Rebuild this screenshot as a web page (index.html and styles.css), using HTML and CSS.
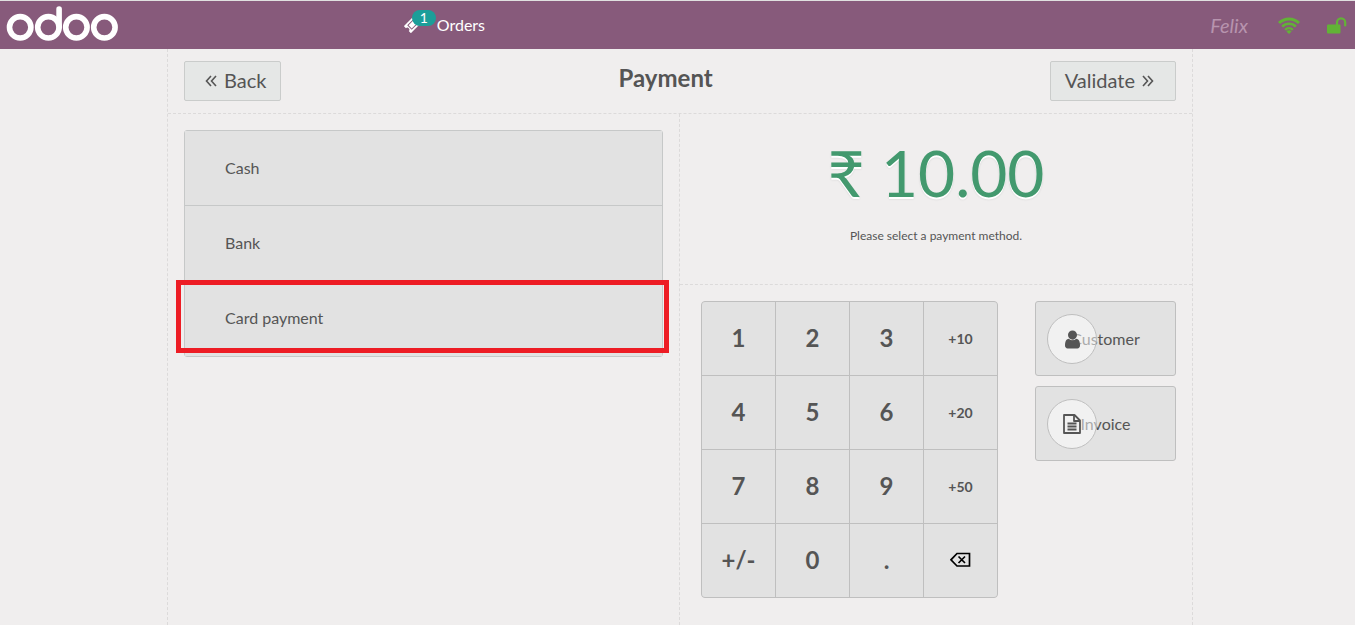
FILE: index.html
```html
<!DOCTYPE html>
<html lang="en">
<head>
    <meta charset="UTF-8">
    <meta name="viewport" content="width=device-width, initial-scale=1.0">
    <title>Payment</title>
    <link rel="stylesheet" href="styles.css">
</head>
<body>
    <header class="topbar">
        <a class="logo" href="#" aria-label="odoo">
            <svg width="112" height="36" viewBox="0 0 112 36" fill="none" stroke="#fff" stroke-width="5.6" stroke-linecap="round">
                <circle cx="14.2" cy="21.3" r="10.7"/>
                <circle cx="42.4" cy="21.3" r="10.7"/>
                <circle cx="70.4" cy="21.3" r="10.7"/>
                <circle cx="98.4" cy="21.3" r="10.7"/>
                <path d="M53.1 3v18"/>
            </svg>
        </a>
        <button class="orders">
            <span class="ticket">
                <svg width="18" height="18" viewBox="0 0 18 18">
                    <g transform="rotate(-45 9 9)">
                        <path fill="#fff" d="M1 4h16v3a2 2 0 0 0 0 4v3H1v-3a2 2 0 0 0 0-4z"/>
                        <path fill="none" stroke="#875a7b" stroke-width="1" d="M4.5 6.300h9v5.400h-9z"/>
                    </g>
                </svg>
                <span class="badge">1</span>
            </span>
            <span>Orders</span>
        </button>
        <div class="status">
            <span class="user">Felix</span>
            <svg class="wifi" width="22" height="17" viewBox="0 0 22 17" fill="none" stroke="#62b336" stroke-width="3">
                <path d="M1 6a14.2 14.2 0 0 1 20 0"/>
                <path d="M4.200 9.600a9.600 9.600 0 0 1 13.600 0" stroke-width="2.600"/>
                <path d="M7.200 12.800a5.400 5.400 0 0 1 7.600 0" stroke-width="2.400"/>
                <path fill="#62b336" stroke="none" d="M11 17l-2.500-2.600a3.600 3.600 0 0 1 5 0z"/>
            </svg>
            <svg width="20" height="17" viewBox="0 0 20 17">
                <rect x="0" y="7.5" width="13.5" height="9" rx="1" fill="#62b336"/>
                <path d="M10 8V5.500a4.100 4.100 0 0 1 8.200 0V8.500" fill="none" stroke="#62b336" stroke-width="2.200" stroke-linecap="round"/>
            </svg>
        </div>
    </header>

    <main class="screen">
        <div class="screen-head">
            <button class="nav back">
                <svg width="12" height="12" viewBox="0 0 12 12"><path d="M6 1L1.500 6L6 11M11 1L6.500 6L11 11"/></svg>
                Back
            </button>
            <h1>Payment</h1>
            <button class="nav next">
                Validate
                <svg width="12" height="12" viewBox="0 0 12 12"><path d="M1 1L5.500 6L1 11M6 1L10.500 6L6 11"/></svg>
            </button>
        </div>

        <div class="columns">
            <section class="left">
                <div class="methods">
                    <button>Cash</button>
                    <button>Bank</button>
                    <button class="marked">Card payment</button>
                </div>
            </section>

            <section class="right">
                <div class="summary">
                    <div class="total">₹ 10.00</div>
                    <p>Please select a payment method.</p>
                </div>
                <div class="controls">
                    <div class="keypad">
                        <button>1</button>
                        <button>2</button>
                        <button>3</button>
                        <button class="small">+10</button>
                        <button>4</button>
                        <button>5</button>
                        <button>6</button>
                        <button class="small">+20</button>
                        <button>7</button>
                        <button>8</button>
                        <button>9</button>
                        <button class="small">+50</button>
                        <button>+/-</button>
                        <button>0</button>
                        <button>.</button>
                        <button aria-label="Backspace">
                            <svg width="22" height="16" viewBox="0 0 22 16" fill="none" stroke="#000" stroke-width="1.700">
                                <path d="M7 1.500h12.500v12.500H7L1 7.800z"/>
                                <path d="M8.500 4.500l6.500 6.500M15 4.500L8.500 11"/>
                            </svg>
                        </button>
                    </div>
                    <div class="actions">
                        <button>
                            Customer
                            <span class="round">
                                <svg width="15" height="21" viewBox="0 0 1280 1792"><path fill="#555" d="M1280 1399q0 109-62.500 187t-150.500 78h-854q-88 0-150.500-78t-62.500-187q0-85 8.500-160.500t31.500-152 58.500-131 94-89 134.500-34.500q131 128 313 128t313-128q76 0 134.500 34.500t94 89 58.500 131 31.500 152 8.500 160.500zm-256-887q0 159-112.500 271.500t-271.500 112.500-271.500-112.500-112.500-271.500 112.500-271.500 271.500-112.500 271.500 112.500 112.500 271.500z"/></svg>
                            </span>
                        </button>
                        <button>
                            Invoice
                            <span class="round">
                                <svg width="18" height="20" viewBox="0 0 18 20" fill="none" stroke="#555" stroke-width="1.800" stroke-linejoin="round">
                                    <path d="M1 1h10.500L17 6.500V19H1z"/>
                                    <path d="M11 1v6h6M4.500 9.500h9M4.500 12.500h9M4.500 15.500h9"/>
                                </svg>
                            </span>
                        </button>
                    </div>
                </div>
            </section>
        </div>
    </main>
</body>
</html>
```
FILE: styles.css
```css
* {
    box-sizing: border-box;
}
body {
    margin: 0;
    min-height: 100vh;
    display: flex;
    flex-direction: column;
    background-color: #f0eeee;
    color: #555;
    font-family: Lato, "Noto Sans", sans-serif;
    font-size: 16px;
}
button {
    font: inherit;
    color: inherit;
    cursor: pointer;
    background-color: #e2e2e2;
    border: 1px solid #bfbfbf;
    padding: 0;
}
svg {
    display: block;
}
.topbar {
    display: flex;
    height: 49px;
    border-top: 1px solid #e0e0e0;
    background-color: #875a7b;
    color: #fff;
}
.logo {
    flex: 5;
    padding: 5px 6px;
}
.orders {
    display: flex;
    align-items: center;
    gap: 15px;
    padding-bottom: 2px;
    background: none;
    border: none;
}
.ticket {
    position: relative;
}
.badge {
    position: absolute;
    left: 8px;
    top: -5px;
    width: 24px;
    height: 16px;
    border-radius: 8px;
    background-color: #1b9e99;
    font-size: 14px;
    line-height: 16px;
}
.status {
    flex: 11;
    display: flex;
    justify-content: flex-end;
    align-items: center;
    padding-right: 8px;
}
.user {
    margin-right: 30px;
    color: #b794ae;
    font-size: 20px;
    font-style: italic;
}
.wifi {
    margin-right: 27px;
}
.screen {
    flex: 1;
    display: flex;
    flex-direction: column;
    width: 100%;
    max-width: 1026px;
    margin: 0 auto;
    border: 1px dashed #dcdada;
    border-width: 0 1px;
}
.screen-head {
    display: flex;
    justify-content: space-between;
    align-items: flex-start;
    padding: 12px 16px;
    border-bottom: 1px dashed #dcdada;
}
.screen-head h1 {
    margin: 0;
    font-size: 24px;
    line-height: 34px;
}
.nav {
    display: flex;
    align-items: center;
    gap: 7px;
    height: 40px;
    padding: 0 14px 2px;
    border: 1px solid #cacccb;
    border-radius: 2px;
    background-color: #e5e7e6;
    font-size: 20px;
}
.nav svg {
    margin-top: 2px;
    fill: none;
    stroke: #555;
    stroke-width: 1.6;
}
.back {
    padding-left: 20px;
}
.next {
    padding-right: 21px;
}
.columns {
    flex: 1;
    display: grid;
    grid-template-columns: 1fr 1fr;
}
.left {
    padding: 16px;
    border-right: 1px dashed #dcdada;
}
.methods {
    display: flex;
    flex-direction: column;
    border: 1px solid #c6c8c8;
    border-radius: 3px;
}
.methods button {
    height: 75px;
    padding: 0 40px 2px;
    border: none;
    border-bottom: 1px solid #c6c8c8;
    text-align: left;
}
.methods button:last-child {
    border-bottom: none;
}
.marked {
    position: relative;
}
.marked::after {
    content: "";
    position: absolute;
    top: -1px;
    right: -7px;
    bottom: 3px;
    left: -9px;
    border: 5px solid #ed1c24;
}
.summary {
    height: 171px;
    padding-top: 20px;
    border-bottom: 1px dashed #dcdada;
    text-align: center;
}
.total {
    color: #43996e;
    font-size: 64px;
    line-height: 78px;
    text-shadow: 0 2px #fff, 0 2px 2px #ccc;
}
.summary p {
    margin: 16px 0 0;
    font-size: 12px;
    line-height: 16px;
}
.controls {
    display: flex;
    justify-content: space-between;
    align-items: flex-start;
    padding: 16px 16px 16px 21px;
}
.keypad {
    display: grid;
    grid-template-columns: repeat(4, 73px);
    grid-auto-rows: 73px;
    gap: 1px;
    overflow: hidden;
    border: 1px solid #bfbfbf;
    border-radius: 4px;
    background-color: #bfbfbf;
}
.keypad button {
    display: flex;
    align-items: center;
    justify-content: center;
    padding-bottom: 2px;
    border: none;
    font-size: 24px;
    font-weight: bold;
}
.keypad .small {
    padding-bottom: 0;
    font-size: 14px;
}
.actions {
    display: flex;
    flex-direction: column;
    gap: 10px;
    width: 141px;
}
.actions button {
    position: relative;
    height: 75px;
    border-radius: 3px;
}
.round {
    position: absolute;
    left: 11px;
    top: 12px;
    display: flex;
    align-items: center;
    justify-content: center;
    width: 50px;
    height: 50px;
    border: 1px solid #bfbfbf;
    border-radius: 50%;
    background-color: rgba(255, 255, 255, 0.5);
}

@media (min-width: 1100px) {
    body {
        padding-left: 5px;
    }
    .topbar {
        margin-left: -5px;
    }
}
```
